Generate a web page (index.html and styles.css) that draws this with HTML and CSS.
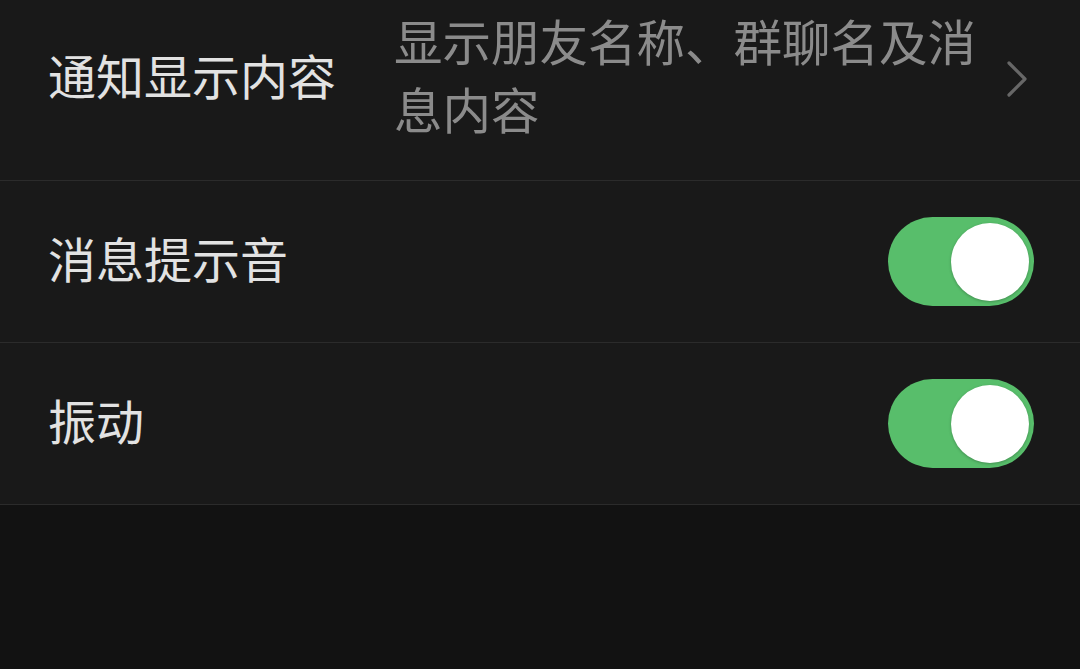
FILE: index.html
```html
<!DOCTYPE html>
<html lang="zh-CN">
<head>
  <meta charset="UTF-8">
  <title>新消息通知</title>
  <link rel="stylesheet" href="styles.css">
</head>
<body>
  <div class="settings">
    <!-- 通知内容：点击进入下一级 -->
    <div class="row row-first">
      <div class="label">通知显示内容</div>
      <div class="value">显示朋友名称、群聊名及消息内容</div>
      <svg class="chevron" width="22" height="38" viewBox="0 0 22 38">
        <polyline points="3,3 19,19 3,35" fill="none" stroke="#676767" stroke-width="3.2" stroke-linecap="round" stroke-linejoin="round"/>
      </svg>
    </div>

    <div class="row">
      <div class="label">消息提示音</div>
      <div class="switch on"><span class="knob"></span></div>
    </div>

    <div class="row">
      <div class="label">振动</div>
      <div class="switch on"><span class="knob"></span></div>
    </div>
  </div>
</body>
</html>
```

FILE: styles.css
```css
body {
  margin: 0;
  padding: 0;
  background: #121212;
  font-family: "Noto Sans CJK SC", "Noto Sans", sans-serif;
  color: #e2e2e2;
  overflow: hidden;
}
.settings {
  background: #191919;
}
.row {
  display: flex;
  align-items: center;
  height: 161px;
  padding: 0 46px 0 48px;
  border-bottom: 1px solid #2b2b2b;
}
.row-first {
  height: auto;
  padding-top: 32px;
  padding-bottom: 38px;
  margin-top: -26px;
}
.label {
  flex-shrink: 0;
  font-size: 48px;
  line-height: 68px;
  padding-bottom: 10px;
}
.row-first .label {
  padding-bottom: 0;
}
.value {
  width: 592px;
  margin-left: 58px;
  font-size: 48.5px;
  line-height: 68px;
  color: #8b8b8b;
}
.chevron {
  margin-left: auto;
  margin-right: 6px;
  margin-top: 10px;
}
.switch {
  margin-left: auto;
  width: 146px;
  height: 89px;
  border-radius: 45px;
  background: #4e4e4e;
  position: relative;
}
.switch.on {
  background: #58be6b;
}
.switch .knob {
  position: absolute;
  top: 6px;
  left: 6px;
  width: 78px;
  height: 78px;
  border-radius: 50%;
  background: #fff;
  box-shadow: 0 1px 3px rgba(0, 0, 0, 0.25);
}
.switch.on .knob {
  left: 63px;
}
```
